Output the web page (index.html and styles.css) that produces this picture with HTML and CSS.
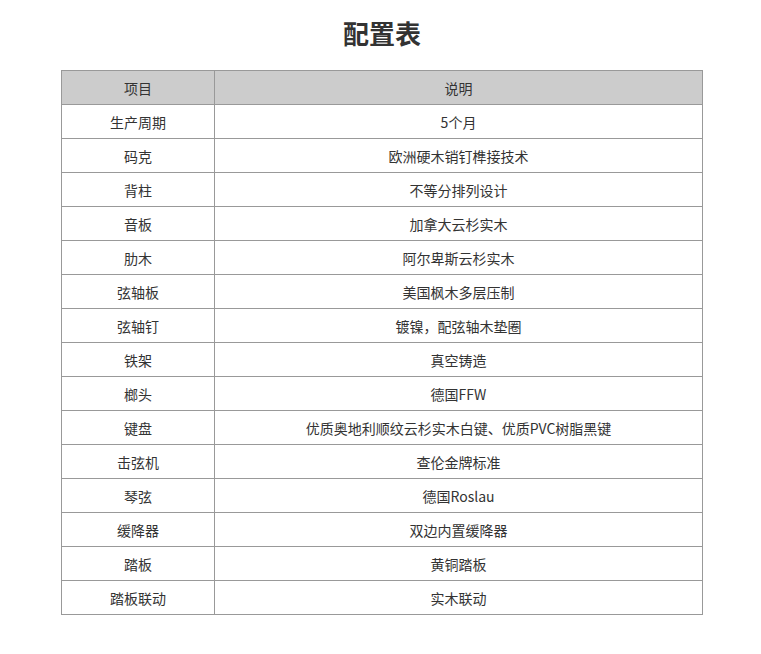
FILE: index.html
```html
<!DOCTYPE html>
<html lang="zh-CN">
<head>
<meta charset="utf-8">
<title>配置表</title>
<link rel="stylesheet" href="styles.css">
</head>
<body>
<div class="page">
  <h1 class="title">配置表</h1>
  <table class="spec">
    <colgroup><col class="c1"><col class="c2"></colgroup>
    <thead>
      <tr><th>项目</th><th>说明</th></tr>
    </thead>
    <tbody>
      <tr><td>生产周期</td><td>5个月</td></tr>
      <tr><td>码克</td><td>欧洲硬木销钉榫接技术</td></tr>
      <tr><td>背柱</td><td>不等分排列设计</td></tr>
      <tr><td>音板</td><td>加拿大云杉实木</td></tr>
      <tr><td>肋木</td><td>阿尔卑斯云杉实木</td></tr>
      <tr><td>弦轴板</td><td>美国枫木多层压制</td></tr>
      <tr><td>弦轴钉</td><td>镀镍，配弦轴木垫圈</td></tr>
      <tr><td>铁架</td><td>真空铸造</td></tr>
      <tr><td>榔头</td><td>德国FFW</td></tr>
      <tr><td>键盘</td><td>优质奥地利顺纹云杉实木白键、优质PVC树脂黑键</td></tr>
      <tr><td>击弦机</td><td>查伦金牌标准</td></tr>
      <tr><td>琴弦</td><td>德国Roslau</td></tr>
      <tr><td>缓降器</td><td>双边内置缓降器</td></tr>
      <tr><td>踏板</td><td>黄铜踏板</td></tr>
      <tr><td>踏板联动</td><td>实木联动</td></tr>
    </tbody>
  </table>
</div>
</body>
</html>
```

FILE: styles.css
```css
html, body {
  margin: 0;
  padding: 0;
  background: #fff;
}
body {
  font-family: "Microsoft YaHei", "Noto Sans CJK SC", "Noto Sans", sans-serif;
  color: #333;
}
.page {
  width: 642px;
  margin-left: 61px;
  padding-top: 15px;
}
.title {
  margin: 0 0 19px 0;
  font-size: 26px;
  line-height: 36px;
  font-weight: bold;
  text-align: center;
  color: #333;
}
.spec {
  width: 642px;
  border-collapse: collapse;
  table-layout: fixed;
  font-size: 14px;
}
.spec .c1 { width: 153px; }
.spec th, .spec td {
  border: 1px solid #999;
  height: 34px;
  padding: 0 8px;
  text-align: center;
  vertical-align: middle;
  font-weight: normal;
  line-height: 20px;
  box-sizing: border-box;
}
.spec th {
  background: #ccc;
}
```
